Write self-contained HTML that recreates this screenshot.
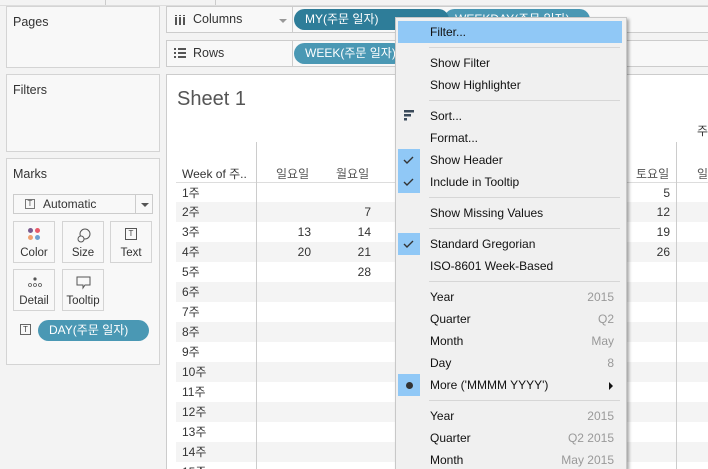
<!DOCTYPE html>
<html style="overflow:hidden"><head><meta charset="utf-8"><style>
*{box-sizing:border-box;margin:0;padding:0}
html,body{width:708px;height:469px;overflow:hidden}
body{background:#f3f3f3;font-family:"Liberation Sans","Noto Sans CJK KR",sans-serif;font-size:12px;color:#333;position:relative}
.a{position:absolute}
.panel{position:absolute;background:#f8f8f8;border:1px solid #d4d4d4}
.pt{position:absolute;left:6px;top:8px;font-size:12.5px;color:#333}
.shelf{position:absolute;left:166px;width:542px;height:27px;background:#f8f8f8;border:1px solid #ccc;border-right:none}
.pill{position:absolute;height:21px;border-radius:11px;color:#fff;font-size:12px;line-height:21px;padding-left:11px;white-space:nowrap;overflow:hidden}
.card{position:absolute;width:42px;height:42px;border:1px solid #d4d4d4;background:#f8f8f8;font-size:11.5px;text-align:center}
.card span{position:absolute;left:0;right:0;bottom:3px}
.row{position:absolute;left:176px;width:532px;height:20px;line-height:20px}
.row.g{background:#f4f4f4}
.row b{font-weight:normal;position:absolute;left:6px}
.n{position:absolute;text-align:right;width:40px}
.menu{position:absolute;left:395px;top:17px;width:232px;height:452px;background:#f0f0f0;border:1px solid #c8c8c8;border-bottom:none;box-shadow:2px 2px 3px rgba(0,0,0,.35)}
.mi{position:absolute;left:2px;width:224px;height:22px;line-height:22px;font-size:12px;color:#111}
.mi .t{position:absolute;left:32px}
.mi .v{position:absolute;right:8px;color:#999}
.chk{position:absolute;left:0;top:0;width:22px;height:22px;background:#90c8f6}
.sep{position:absolute;left:33px;width:191px;height:1px;background:#d6d6d6}
.hl{background:#90c8f6}
</style></head><body>
<div class="a" style="left:0;top:0;width:708px;height:6px;background:#f3f3f3;border-bottom:1px solid #ddd"></div>
<div class="a" style="left:105px;top:0;width:1px;height:5px;background:#ccc"></div>
<div class="a" style="left:215px;top:0;width:1px;height:5px;background:#ccc"></div>

<div class="panel" style="left:6px;top:6px;width:154px;height:62px"><div class="pt">Pages</div></div>
<div class="panel" style="left:6px;top:74px;width:154px;height:78px"><div class="pt">Filters</div></div>
<div class="panel" style="left:6px;top:158px;width:154px;height:207px"><div class="pt">Marks</div>
 <div class="a" style="left:6px;top:35px;width:140px;height:20px;border:1px solid #ccc;background:#f8f8f8">
  <div class="a" style="left:11px;top:4px;width:10px;height:10px;border:1px solid #777;font-size:8px;line-height:8px;text-align:center;color:#555">T</div>
  <div class="a" style="left:29px;top:2px;color:#333">Automatic</div>
  <div class="a" style="left:121px;top:0;width:1px;height:18px;background:#ccc"></div>
  <div class="a" style="left:127px;top:8px;border-left:4px solid transparent;border-right:4px solid transparent;border-top:4px solid #555"></div>
 </div>
 <div class="card" style="left:6px;top:62px"><div class="a" style="left:14px;top:6px;width:5px;height:5px;border-radius:50%;background:#7a5a8e"></div><div class="a" style="left:21px;top:6px;width:5px;height:5px;border-radius:50%;background:#e85a6a"></div><div class="a" style="left:14px;top:13px;width:5px;height:5px;border-radius:50%;background:#f0a070"></div><div class="a" style="left:21px;top:13px;width:5px;height:5px;border-radius:50%;background:#6fa0d0"></div><span>Color</span></div>
 <div class="card" style="left:55px;top:62px"><svg class="a" style="left:13px;top:5px" width="16" height="16"><circle cx="9" cy="7" r="5" fill="none" stroke="#555"/><circle cx="5" cy="12" r="3" fill="#f8f8f8" stroke="#555"/></svg><span>Size</span></div>
 <div class="card" style="left:103px;top:62px"><div class="a" style="left:14px;top:6px;width:12px;height:12px;border:1px solid #555;font-size:8px;line-height:10px;color:#444">T</div><span>Text</span></div>
 <div class="card" style="left:6px;top:110px"><svg class="a" style="left:12px;top:6px" width="18" height="12"><circle cx="9" cy="3" r="1.6" fill="#555"/><circle cx="4" cy="9" r="1.5" fill="none" stroke="#555" stroke-width=".8"/><circle cx="9" cy="9" r="1.5" fill="none" stroke="#555" stroke-width=".8"/><circle cx="14" cy="9" r="1.5" fill="none" stroke="#555" stroke-width=".8"/></svg><span>Detail</span></div>
 <div class="card" style="left:55px;top:110px"><svg class="a" style="left:13px;top:6px" width="16" height="14"><path d="M1 1H14V9H9L7 12V9H1Z" fill="none" stroke="#555"/></svg><span>Tooltip</span></div>
 <div class="a" style="left:13px;top:165px;width:11px;height:11px;border:1px solid #666;font-size:8px;line-height:9px;text-align:center;color:#444">T</div>
</div>
<div class="pill" style="left:38px;top:320px;width:111px;background:#4a98b4">DAY(주문 일자)</div>

<div class="shelf" style="top:6px"><svg class="a" style="left:8px;top:8px" width="12" height="10"><rect x="0" y="2" width="2" height="8" fill="#555"/><rect x="4" y="2" width="2" height="8" fill="#555"/><rect x="8" y="2" width="2" height="8" fill="#555"/><rect x="0" y="0" width="2" height="1" fill="#555"/><rect x="4" y="0" width="2" height="1" fill="#555"/><rect x="8" y="0" width="2" height="1" fill="#555"/></svg><div class="a" style="left:26px;top:5px;font-size:12.5px">Columns</div><div class="a" style="left:112px;top:12px;border-left:4px solid transparent;border-right:4px solid transparent;border-top:4px solid #999"></div><div class="a" style="left:125px;top:0;width:1px;height:26px;background:#ccc"></div></div>
<div class="shelf" style="top:40px"><svg class="a" style="left:7px;top:7px" width="12" height="10"><g fill="#555"><rect x="0" y="0" width="2" height="2"/><rect x="4" y="0" width="8" height="2"/><rect x="0" y="4" width="2" height="2"/><rect x="4" y="4" width="8" height="2"/><rect x="0" y="8" width="2" height="2"/><rect x="4" y="8" width="8" height="2"/></g></svg><div class="a" style="left:26px;top:5px;font-size:12.5px">Rows</div><div class="a" style="left:125px;top:0;width:1px;height:26px;background:#ccc"></div></div>
<div class="pill" style="left:444px;top:9px;width:146px;background:#4a98b4">WEEKDAY(주문 일자)</div>
<div class="pill" style="left:294px;top:9px;width:155px;background:#2e7d99">MY(주문 일자)</div>
<div class="pill" style="left:294px;top:43px;width:110px;background:#4a98b4">WEEK(주문 일자)</div>

<div class="a" style="left:166px;top:74px;width:542px;height:395px;background:#fff;border-left:1px solid #ccc;border-top:1px solid #ccc"></div>
<div class="a" style="left:177px;top:88px;font-size:20px;color:#555">Sheet 1</div>
<div class="a" style="left:697px;top:122px;font-size:12px">주</div>
<div class="a" style="left:182px;top:165px;font-size:12px">Week of 주..</div>
<div class="a" style="left:276px;top:165px;color:#555">일요일</div>
<div class="a" style="left:336px;top:165px;color:#555">월요일</div>
<div class="a" style="left:636px;top:165px;color:#555">토요일</div>
<div class="a" style="left:697px;top:165px;color:#555">일</div>
<div class="a" style="left:176px;top:182px;width:532px;height:1px;background:#ddd"></div>
<div class="row" style="top:183px"><b>1주</b><span class="n" style="left:454px">5</span></div>
<div class="row g" style="top:202px"><b>2주</b><span class="n" style="left:155px">7</span><span class="n" style="left:454px">12</span></div>
<div class="row" style="top:222px"><b>3주</b><span class="n" style="left:95px">13</span><span class="n" style="left:155px">14</span><span class="n" style="left:454px">19</span></div>
<div class="row g" style="top:242px"><b>4주</b><span class="n" style="left:95px">20</span><span class="n" style="left:155px">21</span><span class="n" style="left:454px">26</span></div>
<div class="row" style="top:262px"><b>5주</b><span class="n" style="left:155px">28</span></div>
<div class="row g" style="top:282px"><b>6주</b></div>
<div class="row" style="top:302px"><b>7주</b></div>
<div class="row g" style="top:322px"><b>8주</b></div>
<div class="row" style="top:342px"><b>9주</b></div>
<div class="row g" style="top:362px"><b>10주</b></div>
<div class="row" style="top:382px"><b>11주</b></div>
<div class="row g" style="top:402px"><b>12주</b></div>
<div class="row" style="top:422px"><b>13주</b></div>
<div class="row g" style="top:442px;height:20px"><b>14주</b></div>
<div class="row" style="top:462px;height:7px;overflow:hidden"><b>15주</b></div>
<div class="a" style="left:256px;top:142px;width:1px;height:327px;background:#ccc"></div>
<div class="a" style="left:676px;top:142px;width:1px;height:327px;background:#ccc"></div>

<div class="menu">
 <div class="mi hl" style="top:3px;width:224px"><span class="t">Filter...</span></div>
 <div class="sep" style="top:29px"></div>
 <div class="mi" style="top:34px"><span class="t">Show Filter</span></div>
 <div class="mi" style="top:56px"><span class="t">Show Highlighter</span></div>
 <div class="sep" style="top:82px"></div>
 <div class="mi" style="top:87px"><svg class="a" style="left:6px;top:5px" width="12" height="11"><g fill="#3a4a5a"><rect x="0" y="0" width="10" height="2.5"/><rect x="0" y="4" width="7" height="2.5"/><rect x="0" y="8" width="3" height="2.5"/></g></svg><span class="t">Sort...</span></div>
 <div class="mi" style="top:109px"><span class="t">Format...</span></div>
 <div class="mi" style="top:131px"><div class="chk"><svg width="22" height="22"><path d="M6 11l3 3 6-6" fill="none" stroke="#333" stroke-width="1.4"/></svg></div><span class="t">Show Header</span></div>
 <div class="mi" style="top:153px"><div class="chk"><svg width="22" height="22"><path d="M6 11l3 3 6-6" fill="none" stroke="#333" stroke-width="1.4"/></svg></div><span class="t">Include in Tooltip</span></div>
 <div class="sep" style="top:179px"></div>
 <div class="mi" style="top:184px"><span class="t">Show Missing Values</span></div>
 <div class="sep" style="top:210px"></div>
 <div class="mi" style="top:215px"><div class="chk"><svg width="22" height="22"><path d="M6 11l3 3 6-6" fill="none" stroke="#333" stroke-width="1.4"/></svg></div><span class="t">Standard Gregorian</span></div>
 <div class="mi" style="top:237px"><span class="t">ISO-8601 Week-Based</span></div>
 <div class="sep" style="top:263px"></div>
 <div class="mi" style="top:268px"><span class="t">Year</span><span class="v">2015</span></div>
 <div class="mi" style="top:290px"><span class="t">Quarter</span><span class="v">Q2</span></div>
 <div class="mi" style="top:312px"><span class="t">Month</span><span class="v">May</span></div>
 <div class="mi" style="top:334px"><span class="t">Day</span><span class="v">8</span></div>
 <div class="mi" style="top:356px"><div class="chk"><div class="a" style="left:8px;top:8px;width:7px;height:7px;border-radius:50%;background:#333"></div></div><span class="t">More ('MMMM YYYY')</span><div class="a" style="left:211px;top:8px;border-top:4px solid transparent;border-bottom:4px solid transparent;border-left:4px solid #111"></div></div>
 <div class="sep" style="top:382px"></div>
 <div class="mi" style="top:387px"><span class="t">Year</span><span class="v">2015</span></div>
 <div class="mi" style="top:409px"><span class="t">Quarter</span><span class="v">Q2 2015</span></div>
 <div class="mi" style="top:431px"><span class="t">Month</span><span class="v">May 2015</span></div>
</div>
</body></html>
